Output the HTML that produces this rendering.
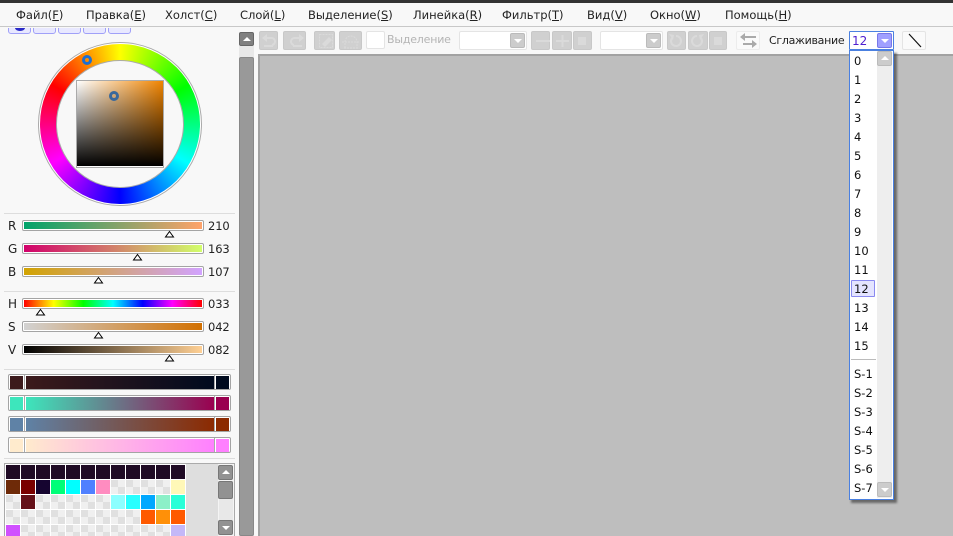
<!DOCTYPE html>
<html><head><meta charset="utf-8">
<style>
html,body{margin:0;padding:0}
body{width:953px;height:536px;position:relative;overflow:hidden;background:#f8f8f8;font:11.500px "DejaVu Sans","Liberation Sans",sans-serif;color:#222}
div,span,svg{position:absolute;box-sizing:border-box}
u{text-decoration:underline}
.m{top:7px;line-height:16px;white-space:nowrap;font-size:11.500px}
.sep{left:4px;width:231px;height:1px;background:#ddd}
.tab{top:24px;width:23px;height:10px;background:#e8e8ff;border:1px solid #a0a0f8;border-radius:0 0 3px 3px}
.l{left:8px;font-size:12px;line-height:14px}
.v{left:208px;font-size:11.500px;letter-spacing:-.1px;line-height:14px}
.bar{left:22px;width:182px;height:11px;border:1px solid #a4a4a4;border-radius:2px;background:#fff;padding:1px}
.bar i{display:block;height:100%}
.gb{left:8px;width:223px;height:16px;border:1px solid #a4a4a4;border-radius:2px;background:#fff}
.gb b{position:absolute;top:1px;height:13px;display:block}
.gb em{position:absolute;top:0;height:14px;width:1px;background:#aaa;display:block}
.btn{top:31px;height:19px;background:#d0d0d0;border:1px solid #c8c8c8;border-radius:2px}
.arr{top:33px;width:15px;height:15px;background:#ccc;border:1px solid #bbb;border-radius:2px}
.arr:after{content:"";position:absolute;left:3px;top:5px;border:4px solid transparent;border-top:4px solid #fff;border-bottom:0}
.pu{width:15px;height:15px;background:#ccc;border:1px solid #bbb;border-radius:2px}
.pu:after{content:"";position:absolute;left:3px;top:4px;border:4px solid transparent;border-bottom:4px solid #fff;border-top:0}
.cb{top:31px;height:19px;background:#fff;border:1px solid #e4e4e4;border-radius:2px}
.sb{width:15px;height:15px;background:#929292;border:1px solid #777;border-radius:2px}
.up:after{content:"";position:absolute;left:3px;top:4px;border:4px solid transparent;border-bottom:4px solid #fff;border-top:0}
.dn:after{content:"";position:absolute;left:3px;top:5px;border:4px solid transparent;border-top:4px solid #fff;border-bottom:0}
.it{left:854px;font-size:11.500px;line-height:14px;color:#111}
.c{width:14px;height:14px}
.k{width:14px;height:14px;background:conic-gradient(#f0f0f0 25%,#e0e0e0 0 50%,#f0f0f0 0 75%,#e0e0e0 0)}
.d{background:#1f0a24}
</style></head><body>
<div style="left:0;top:0;width:953px;height:3px;background:#333"></div>
<div style="left:0;top:26px;width:953px;height:1px;background:#c8c8c8"></div>
<span class="m" style="left:16px">Файл(<u>F</u>)</span>
<span class="m" style="left:86px">Правка(<u>E</u>)</span>
<span class="m" style="left:165px">Холст(<u>C</u>)</span>
<span class="m" style="left:240px">Слой(<u>L</u>)</span>
<span class="m" style="left:308px">Выделение(<u>S</u>)</span>
<span class="m" style="left:413px">Линейка(<u>R</u>)</span>
<span class="m" style="left:502px">Фильтр(<u>T</u>)</span>
<span class="m" style="left:587px">Вид(<u>V</u>)</span>
<span class="m" style="left:650px">Окно(<u>W</u>)</span>
<span class="m" style="left:725px">Помощь(<u>H</u>)</span>

<!-- tabs -->
<div style="left:0;top:28px;width:234px;height:7px;overflow:hidden">
<div class="tab" style="left:8px;top:-4px"></div>
<div class="tab" style="left:33px;top:-4px"></div>
<div class="tab" style="left:58px;top:-4px"></div>
<div class="tab" style="left:83px;top:-4px"></div>
<div class="tab" style="left:108px;top:-4px"></div>
<div style="left:15px;top:0;width:10px;height:3px;background:#2a2ac8;border-radius:0 0 50% 50%/0 0 100% 100%"></div>
</div>

<!-- wheel -->
<div style="left:38px;top:42px;width:164px;height:164px;border-radius:50%;background:#aaa"></div>
<div style="left:39px;top:43px;width:162px;height:162px;border-radius:50%;background:#fff"></div>
<div style="left:40px;top:44px;width:160px;height:160px;border-radius:50%;background:conic-gradient(#ff0,#0f0,#0ff,#00f,#f0f,#f00,#ff0)"></div>
<div style="left:56px;top:60px;width:128px;height:128px;border-radius:50%;background:#aaa"></div>
<div style="left:57px;top:61px;width:126px;height:126px;border-radius:50%;background:#f8f8f8"></div>
<div style="left:76px;top:80px;width:88px;height:88px;background:#aaa"></div>
<div style="left:77px;top:81px;width:86px;height:86px;background:#fff"></div>
<div style="left:77px;top:81px;width:86px;height:85px;background:linear-gradient(to top,#000,rgba(0,0,0,0)),linear-gradient(to right,#fff,#f08400)"></div>
<div style="left:82px;top:55px;width:10px;height:10px;border-radius:50%;border:3px solid #1f6fd0"></div>
<div style="left:109px;top:91px;width:10px;height:10px;border-radius:50%;border:3px solid #38689c"></div>

<div class="sep" style="top:213px"></div>
<div class="sep" style="top:291px"></div>
<div class="sep" style="top:369px"></div>
<div class="sep" style="top:458px"></div>

<!-- sliders -->
<span class="l" style="top:219px">R</span><div class="bar" style="top:220px"><i style="background:linear-gradient(to right,#00a36b,#ffa36b)"></i></div><span class="v" style="top:219px">210</span>
<span class="l" style="top:242px">G</span><div class="bar" style="top:243px"><i style="background:linear-gradient(to right,#d2006b,#d2ff6b)"></i></div><span class="v" style="top:242px">163</span>
<span class="l" style="top:265px">B</span><div class="bar" style="top:266px"><i style="background:linear-gradient(to right,#d2a300,#d2a3ff)"></i></div><span class="v" style="top:265px">107</span>
<span class="l" style="top:297px">H</span><div class="bar" style="top:298px"><i style="background:linear-gradient(to right,#f00,#ff0,#0f0,#0ff,#00f,#f0f,#f00)"></i></div><span class="v" style="top:297px">033</span>
<span class="l" style="top:320px">S</span><div class="bar" style="top:321px"><i style="background:linear-gradient(to right,#d2d2d2,#d27000)"></i></div><span class="v" style="top:320px">042</span>
<span class="l" style="top:343px">V</span><div class="bar" style="top:344px"><i style="background:linear-gradient(to right,#000,#ffd094)"></i></div><span class="v" style="top:343px">082</span>

<svg style="left:0;top:210px" width="234" height="160" fill="#fff" stroke="#000" stroke-width="1">
<path d="M169.500 21.500l4 5.500h-8z"/><path d="M137.500 44.500l4 5.500h-8z"/><path d="M98.500 67.500l4 5.500h-8z"/>
<path d="M40.500 99.500l4 5.500h-8z"/><path d="M98.500 122.500l4 5.500h-8z"/><path d="M169.500 145.500l4 5.500h-8z"/>
</svg>

<!-- gradient bars -->
<div class="gb" style="top:374px"><b style="left:1px;width:13px;background:#3c1a1c"></b><em style="left:15px"></em><b style="left:17px;width:188px;background:linear-gradient(to right,#3c1a1c,#000a1e)"></b><em style="left:205px"></em><b style="left:207px;width:13px;background:#000a1e"></b></div>
<div class="gb" style="top:395px"><b style="left:1px;width:13px;background:#3de6bc"></b><em style="left:15px"></em><b style="left:17px;width:188px;background:linear-gradient(to right,#3de6bc,#9a0050)"></b><em style="left:205px"></em><b style="left:207px;width:13px;background:#9a0050"></b></div>
<div class="gb" style="top:416px"><b style="left:1px;width:13px;background:#5f82a6"></b><em style="left:15px"></em><b style="left:17px;width:188px;background:linear-gradient(to right,#5f82a6,#8c2a00)"></b><em style="left:205px"></em><b style="left:207px;width:13px;background:#8c2a00"></b></div>
<div class="gb" style="top:437px"><b style="left:1px;width:13px;background:#ffebcd"></b><em style="left:15px"></em><b style="left:17px;width:188px;background:linear-gradient(to right,#ffebcd,#ff80ff)"></b><em style="left:205px"></em><b style="left:207px;width:13px;background:#ff80ff"></b></div>

<!-- palette -->
<div style="left:4px;top:463px;width:231px;height:73px;border:1px solid #aaa;border-width:1px 1px 0 1px;background:#fff"></div>
<div style="left:186px;top:464px;width:48px;height:72px;background:#dedede"></div>
<div style="left:218px;top:464px;width:16px;height:72px;background:#f4f4f4"></div>
<div style="left:219px;top:481px;width:14px;height:40px;background:#e8e8e8"></div>
<div class="sb up" style="left:218px;top:465px"></div>
<div class="sb" style="left:218px;top:481px;height:18px"></div>
<div class="sb dn" style="left:218px;top:520px"></div>

<div style="left:6px;top:465px;width:180px;height:71px;overflow:hidden">
<div class="c d" style="left:0;top:0"></div><div class="c d" style="left:15px;top:0"></div><div class="c d" style="left:30px;top:0"></div><div class="c d" style="left:45px;top:0"></div><div class="c d" style="left:60px;top:0"></div><div class="c d" style="left:75px;top:0"></div><div class="c d" style="left:90px;top:0"></div><div class="c d" style="left:105px;top:0"></div><div class="c d" style="left:120px;top:0"></div><div class="c d" style="left:135px;top:0"></div><div class="c d" style="left:150px;top:0"></div><div class="c d" style="left:165px;top:0"></div>

<div class="c" style="left:0;top:15px;background:#6e2a08"></div><div class="c" style="left:15px;top:15px;background:#7a0000"></div><div class="c" style="left:30px;top:15px;background:#160530"></div><div class="c" style="left:45px;top:15px;background:#00ff78"></div><div class="c" style="left:60px;top:15px;background:#0ff"></div><div class="c" style="left:75px;top:15px;background:#5080ff"></div><div class="c" style="left:90px;top:15px;background:#ff8cc0"></div><div class="k" style="left:105px;top:15px"></div><div class="k" style="left:120px;top:15px"></div><div class="k" style="left:135px;top:15px"></div><div class="k" style="left:150px;top:15px"></div><div class="c" style="left:165px;top:15px;background:#fff8b8"></div>

<div class="k" style="left:0;top:30px"></div><div class="c" style="left:15px;top:30px;background:#641018"></div><div class="k" style="left:30px;top:30px"></div><div class="k" style="left:45px;top:30px"></div><div class="k" style="left:60px;top:30px"></div><div class="k" style="left:75px;top:30px"></div><div class="k" style="left:90px;top:30px"></div><div class="c" style="left:105px;top:30px;background:#8cffff"></div><div class="c" style="left:120px;top:30px;background:#28ffff"></div><div class="c" style="left:135px;top:30px;background:#00a8ff"></div><div class="c" style="left:150px;top:30px;background:#8cf0c8"></div><div class="c" style="left:165px;top:30px;background:#28ffd8"></div>

<div class="k" style="left:0;top:45px"></div><div class="k" style="left:15px;top:45px"></div><div class="k" style="left:30px;top:45px"></div><div class="k" style="left:45px;top:45px"></div><div class="k" style="left:60px;top:45px"></div><div class="k" style="left:75px;top:45px"></div><div class="k" style="left:90px;top:45px"></div><div class="k" style="left:105px;top:45px"></div><div class="k" style="left:120px;top:45px"></div><div class="c" style="left:135px;top:45px;background:#ff5a00"></div><div class="c" style="left:150px;top:45px;background:#ff9008"></div><div class="c" style="left:165px;top:45px;background:#ff5a00"></div>

<div class="c" style="left:0;top:60px;background:#d050ff"></div><div class="k" style="left:15px;top:60px"></div><div class="k" style="left:30px;top:60px"></div><div class="k" style="left:45px;top:60px"></div><div class="k" style="left:60px;top:60px"></div><div class="k" style="left:75px;top:60px"></div><div class="k" style="left:90px;top:60px"></div><div class="k" style="left:105px;top:60px"></div><div class="k" style="left:120px;top:60px"></div><div class="k" style="left:135px;top:60px"></div><div class="k" style="left:150px;top:60px"></div><div class="c" style="left:165px;top:60px;background:#c4b8f8"></div>
</div>

<!-- vertical scrollbar -->
<div style="left:239px;top:46px;width:15px;height:490px;background:#e8e8e8"></div>
<div class="sb up" style="left:239px;top:32px;height:14px;background:#808080;border-color:#666"></div>
<div class="sb" style="left:239px;top:57px;height:479px;background:#999;border-color:#888"></div>

<!-- canvas -->
<div style="left:258px;top:54px;width:695px;height:482px;background:#bebebe;border:solid #a2a2a2;border-width:2px 0 0 2px"></div>

<!-- toolbar -->
<div class="btn" style="left:259px;width:19px"></div>
<div class="btn" style="left:283px;width:23px"></div>
<div class="btn" style="left:314px;width:21px"></div>
<div class="btn" style="left:339px;width:23px"></div>
<svg style="left:255px;top:28px" width="110" height="26" fill="none" stroke="#dadada" stroke-width="2">
<path d="M11 10h5a3.500 3.500 0 0 1 1 7"/><path d="M12 6l-5 4 5 4z" fill="#dadada" stroke="none"/><path d="M9 18h9"/>
<path d="M45 10h-5a3.500 3.500 0 0 0-1 7"/><path d="M44 6l5 4-5 4z" fill="#dadada" stroke="none"/><path d="M38 18h9"/>
<path d="M64.500 6.500h13v13h-13z" stroke-width="1" stroke-dasharray="2 1"/><path d="M67 16l7-7 3 3-7 7z" fill="#dadada" stroke="none"/>
<path d="M87 14h18M90 20v-6a6 6 0 0 1 12 0v6M89 20h14" stroke-width="1" stroke-dasharray="2 1"/>
</svg>
<div class="cb" style="left:366px;width:19px;height:18px"></div>
<span style="left:387px;top:32px;font-size:11px;letter-spacing:-.2px;line-height:16px;color:#b4b4b4">Выделение</span>
<div class="cb" style="left:459px;width:68px"></div>
<div class="arr" style="left:510px"></div>
<div class="btn" style="left:531px;width:19px"></div>
<div class="btn" style="left:552px;width:20px"></div>
<div class="btn" style="left:573px;width:19px"></div>
<div class="cb" style="left:600px;width:63px"></div>
<div class="arr" style="left:646px"></div>
<div class="btn" style="left:667px;width:19px"></div>
<div class="btn" style="left:688px;width:20px"></div>
<div class="btn" style="left:709px;width:18px"></div>
<svg style="left:530px;top:30px" width="200" height="22" fill="none" stroke="#dadada" stroke-width="2">
<path d="M6 11h14M26 11h13M32.500 5v12"/><path d="M48 7h8v8h-8z" fill="#dadada" stroke="none"/>
<path d="M146 6a5 5 0 1 1-4 2"/><path d="M139 4l5 1-1 5z" fill="#dadada" stroke="none"/>
<path d="M167 6a5 5 0 1 0 4 2"/><path d="M174 4l-5 1 1 5z" fill="#dadada" stroke="none"/>
<path d="M184 7h8v8h-8z" fill="#dadada" stroke="none"/>
</svg>
<div class="cb" style="left:736px;width:24px;background:#fafafa;border-color:#ececec"></div>
<svg style="left:736px;top:31px" width="24" height="19" fill="#aaa" stroke="#aaa" stroke-width="1.500">
<path d="M7 6h13M7 13h13" fill="none" stroke-width="2"/><path d="M9 2l-5 4 5 4z" stroke="none"/><path d="M16 9l5 4-5 4z" stroke="none"/>
</svg>
<span style="left:769px;top:33px;font-size:11px;letter-spacing:-.3px;line-height:16px;color:#222">Сглаживание</span>
<div style="left:849px;top:31px;width:45px;height:19px;background:#fff;border:1px solid #4a80e0;border-radius:1px"></div>
<span style="left:852px;top:33px;font-size:12px;line-height:16px;color:#5020d0">12</span>
<div class="arr" style="left:877px;background:#a0a0ff;border-color:#7878e8"></div>
<div class="cb" style="left:902px;width:24px;background:#fafafa;border-color:#e4e4e4"></div>
<svg style="left:902px;top:31px" width="24" height="19"><path d="M7 3l12 13" stroke="#111" stroke-width="1.200" fill="none"/></svg>

<!-- popup -->
<div style="left:851px;top:53px;width:46px;height:450px;background:#444;opacity:.7;filter:blur(1px)"></div>
<div style="left:849px;top:50px;width:45px;height:450px;background:#fff;border:1px solid #4a80e0"></div>
<div style="left:877px;top:51px;width:15px;height:447px;background:#eee"></div>
<div class="pu" style="left:877px;top:51px"></div>
<div class="arr" style="left:877px;top:482px"></div>
<div style="left:851px;top:280px;width:24px;height:17px;background:#e4e4ff;border:1px solid #8a8af0;border-radius:1px"></div>
<div style="left:851px;top:359px;width:25px;height:1px;background:#bbb"></div>
<span class="it" style="top:54px">0</span>
<span class="it" style="top:73px">1</span>
<span class="it" style="top:92px">2</span>
<span class="it" style="top:111px">3</span>
<span class="it" style="top:130px">4</span>
<span class="it" style="top:149px">5</span>
<span class="it" style="top:168px">6</span>
<span class="it" style="top:187px">7</span>
<span class="it" style="top:206px">8</span>
<span class="it" style="top:225px">9</span>
<span class="it" style="top:244px">10</span>
<span class="it" style="top:263px">11</span>
<span class="it" style="top:282px">12</span>
<span class="it" style="top:301px">13</span>
<span class="it" style="top:320px">14</span>
<span class="it" style="top:339px">15</span>
<span class="it" style="top:367px">S-1</span>
<span class="it" style="top:386px">S-2</span>
<span class="it" style="top:405px">S-3</span>
<span class="it" style="top:424px">S-4</span>
<span class="it" style="top:443px">S-5</span>
<span class="it" style="top:462px">S-6</span>
<span class="it" style="top:481px">S-7</span>
</body></html>
